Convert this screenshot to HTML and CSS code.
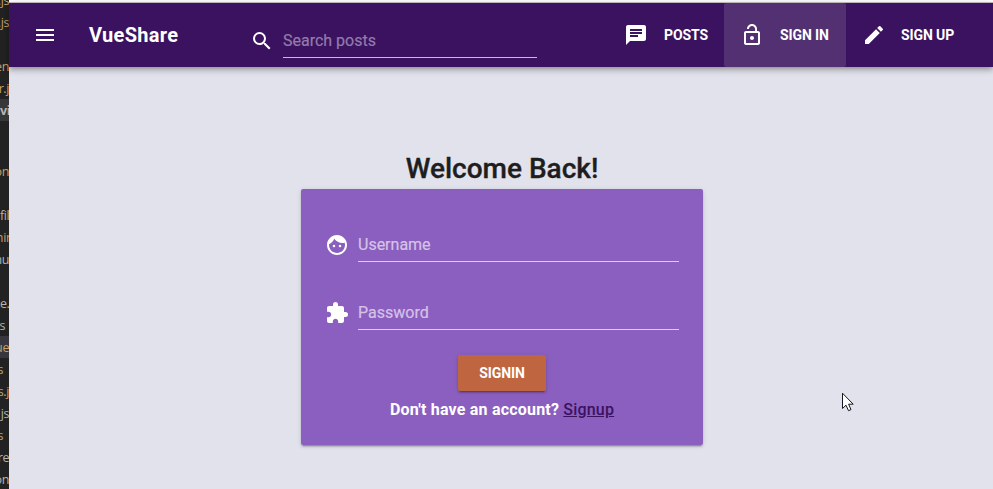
FILE: index.html
```
<!DOCTYPE html>
<html lang="en">
<head>
<meta charset="utf-8">
<title>VueShare</title>
<link rel="stylesheet" href="styles.css">
</head>
<body>
<div class="screen">
  <aside class="files">
    <div class="file gold">.js</div>
    <div class="file gold">.js</div>
    <div class="file"></div>
    <div class="file gold">en</div>
    <div class="file gold">r.j</div>
    <div class="file open">vi</div>
    <div class="gap"></div>
    <div class="file gold">on</div>
    <div class="file"></div>
    <div class="file cut">file</div>
    <div class="file gold nudge">nin</div>
    <div class="file">nu</div>
    <div class="file"></div>
    <div class="file cut">e.v</div>
    <div class="file short">s</div>
    <div class="file gold selected">ue</div>
    <div class="file gold shorter">s</div>
    <div class="file gold">s.j</div>
    <div class="file">js</div>
    <div class="file gold shorter">s</div>
    <div class="file">re</div>
    <div class="file">on</div>
  </aside>
  <div class="app">
    <header class="toolbar">
      <svg class="icon menu" viewBox="0 0 24 24"><path d="M3 18h18v-2H3v2zm0-5h18v-2H3v2zm0-7v2h18V6H3z"/></svg>
      <div class="brand">VueShare</div>
      <div class="search">
        <svg class="icon" viewBox="0 0 24 24"><path d="M15.5 14h-.79l-.28-.27A6.471 6.471 0 0 0 16 9.5 6.5 6.5 0 1 0 9.5 16c1.61 0 3.09-.59 4.23-1.57l.27.28v.79l5 4.99L20.49 19l-4.99-5zm-6 0C7.01 14 5 11.99 5 9.5S7.01 5 9.5 5 14 7.01 14 9.5 11.99 14 9.5 14z"/></svg>
        <div class="search-field">Search posts</div>
      </div>
      <nav class="nav">
        <a class="nav-item"><svg class="icon" viewBox="0 0 24 24"><path d="M20 2H4c-1.1 0-1.99.9-1.99 2L2 22l4-4h14c1.1 0 2-.9 2-2V4c0-1.1-.9-2-2-2zM6 9h12v2H6V9zm8 5H6v-2h8v2zm4-6H6V6h12v2z"/></svg>POSTS</a>
        <a class="nav-item active"><svg class="icon" viewBox="0 0 24 24"><path d="M12 17c1.1 0 2-.9 2-2s-.9-2-2-2-2 .9-2 2 .9 2 2 2zm6-9h-1V6c0-2.760-2.240-5-5-5S7 3.240 7 6h1.900c0-1.710 1.390-3.100 3.100-3.100s3.100 1.390 3.100 3.100v2H6c-1.100 0-2 .9-2 2v10c0 1.100.9 2 2 2h12c1.100 0 2-.9 2-2V10c0-1.100-.9-2-2-2zm0 12H6V10h12v10z"/></svg>SIGN IN</a>
        <a class="nav-item last"><svg class="icon" viewBox="0 0 24 24"><path d="M3 17.250V21h3.750L17.810 9.940l-3.750-3.750L3 17.250zM20.710 7.040a.996.996 0 0 0 0-1.410l-2.340-2.340a.996.996 0 0 0-1.410 0l-1.830 1.830 3.750 3.750 1.830-1.830z"/></svg>SIGN UP</a>
      </nav>
    </header>
    <main class="content">
      <h1 class="welcome">Welcome Back!</h1>
      <form class="card">
        <div class="field">
          <svg class="icon" viewBox="0 0 24 24"><path d="M9 11.750a1.250 1.250 0 1 0 0 2.500 1.250 1.250 0 0 0 0-2.500zm6 0a1.250 1.250 0 1 0 0 2.500 1.250 1.250 0 0 0 0-2.500zM12 2C6.480 2 2 6.480 2 12s4.480 10 10 10 10-4.480 10-10S17.520 2 12 2zm0 18c-4.410 0-8-3.590-8-8 0-.290.020-.580.050-.860 2.360-1.050 4.230-2.980 5.210-5.370C11.070 8.330 14.050 10 17.420 10c.780 0 1.530-.090 2.250-.260.210.710.330 1.470.330 2.260 0 4.410-3.590 8-8 8z"/></svg>
          <div class="input">Username</div>
        </div>
        <div class="field">
          <svg class="icon" viewBox="0 0 24 24"><path d="M20.500 11H19V7c0-1.100-.9-2-2-2h-4V3.500a2.500 2.500 0 0 0-5 0V5H4c-1.100 0-1.990.9-1.990 2v3.800H3.500c1.490 0 2.700 1.210 2.700 2.700s-1.210 2.700-2.700 2.700H2V20c0 1.100.9 2 2 2h3.800v-1.500c0-1.490 1.210-2.700 2.700-2.700s2.700 1.210 2.700 2.700V22H17c1.100 0 2-.9 2-2v-4h1.500a2.500 2.500 0 0 0 0-5z"/></svg>
          <div class="input">Password</div>
        </div>
        <button class="signin" type="button">SIGNIN</button>
        <p class="prompt">Don't have an account? <a class="signup">Signup</a></p>
      </form>
    </main>
  </div>
  <svg class="cursor" viewBox="0 0 13 20"><path d="M1.500 1.200V16.500L5 13.200L7.500 18.700L10 17.600L7.600 12.200H12.200Z"/></svg>
</div>
</body>
</html>
```
FILE: styles.css
```
* { box-sizing: border-box; }
body { margin: 0; font-family: Roboto, "Liberation Sans", sans-serif; }
.screen { position: relative; display: flex; width: 993px; height: 489px; overflow: hidden; background: #e2e2ec; }

.files { width: 9px; flex: none; overflow: hidden; background: #222; color: #b5b5b5; font: 12.5px/23px "Open Sans", sans-serif; letter-spacing: -.4px; margin-top: -11px; }
.file { display: flex; justify-content: flex-end; height: 22px; white-space: nowrap; }
.gold { color: #c5a06c; }
.cut { justify-content: flex-start; }
.nudge { justify-content: center; }
.short { padding-right: 4px; }
.shorter { padding-right: 6px; }
.open { background: #37373a; font-weight: 700; justify-content: flex-start; }
.selected { background: #37373d; }
.gap { height: 39px; }

.app { flex: 1; min-width: 0; border-top: 2px solid #fff; }
.toolbar { display: flex; align-items: center; height: 65px; border-top: 1px solid #b9b5bb; padding-left: 24px; background: #3b125f; color: #fff; box-shadow: 0 2px 4px -1px rgba(0,0,0,.2), 0 4px 5px rgba(0,0,0,.14), 0 1px 10px rgba(0,0,0,.12); }
.icon { width: 24px; height: 24px; flex: none; fill: #fff; }
.brand { width: 161px; margin-left: 32px; font-size: 20px; font-weight: 700; letter-spacing: .3px; }
.search { display: flex; align-items: center; gap: 9px; margin-top: 12px; }
.search-field { width: 254px; height: 33px; border-bottom: 1px solid #cbb6dd; font-size: 16px; line-height: 32px; color: #937bab; -webkit-text-stroke: .2px #937bab; }
.nav { display: flex; height: 64px; margin-left: 71px; }
.nav-item { display: flex; align-items: center; gap: 16px; padding: 0 16px; border-radius: 2px; font-size: 14px; font-weight: 700; letter-spacing: -.1px; }
.active { width: 122px; background: #523071; }
.last { gap: 15px; }

.content { display: flex; flex-direction: column; align-items: center; padding: 82px 0 0 2px; }
.welcome { margin: 0; font-size: 28px; line-height: 40px; font-weight: 500; color: #1e1e20; -webkit-text-stroke: .35px #1e1e20; }
.card { display: flex; flex-direction: column; align-items: center; width: 402px; height: 256px; padding: 39px 24px 0; border-radius: 2px; background: #8b5fbf; box-shadow: 0 3px 1px -2px rgba(0,0,0,.2), 0 2px 2px rgba(0,0,0,.14), 0 1px 5px rgba(0,0,0,.12); }
.field { display: flex; align-items: center; gap: 9px; width: 100%; margin-bottom: 34px; }
.input { width: 321px; height: 34px; border-bottom: 1px solid #dccdea; font-size: 16px; line-height: 34px; color: #d5c3e7; -webkit-text-stroke: .2px #d5c3e7; }
.signin { width: 88px; height: 36px; margin-top: -9px; padding: 0; border: 0; border-radius: 2px; background: #bf6540; color: #fff; font: 700 14px Roboto, sans-serif; letter-spacing: -.1px; box-shadow: 0 3px 1px -2px rgba(0,0,0,.2), 0 2px 2px rgba(0,0,0,.14), 0 1px 5px rgba(0,0,0,.12); }
.prompt { margin: 7px 0 0; font-size: 16px; line-height: 24px; font-weight: 700; letter-spacing: .2px; color: #fff; }
.signup { color: #3b125f; font-weight: 500; text-decoration: underline; }
.cursor { position: absolute; left: 841px; top: 392px; width: 13px; height: 20px; fill: #fff; stroke: #171722; stroke-width: 1; }
```
